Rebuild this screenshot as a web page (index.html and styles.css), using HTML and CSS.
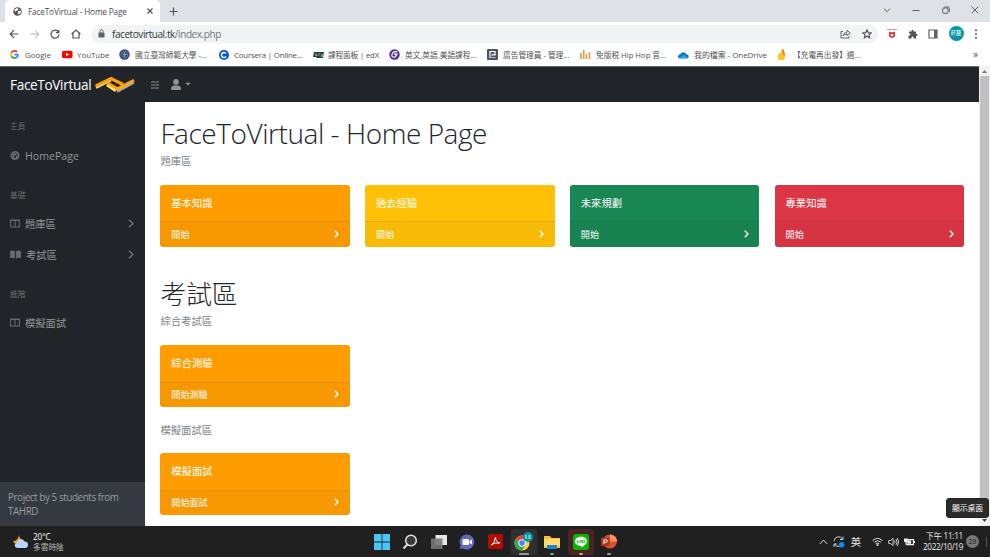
FILE: index.html
```html
<!DOCTYPE html>
<html lang="zh-Hant">
<head>
<meta charset="utf-8">
<title>FaceToVirtual - Home Page</title>
<link rel="stylesheet" href="styles.css">
</head>
<body>
<header class="tabs">
  <div class="tab">
    <svg width="9" height="9" viewBox="0 0 18 18"><circle cx="9" cy="9" r="8.5" fill="#555a60"/><path d="M3 5l5-3 3 2-2 3-4 1-1 3zM10 9l5-2 1 3-4 5-2-2z" fill="#fff"/></svg>
    <span class="tab-title">FaceToVirtual - Home Page</span>
    <svg width="6" height="6" viewBox="0 0 6 6" class="line dark"><path d="M.5.5l5 5M5.500.5l-5 5"/></svg>
  </div>
  <svg class="plus line dark" width="9" height="9" viewBox="0 0 9 9"><path d="M4.500.5v8M.5 4.500h8"/></svg>
  <div class="win">
    <svg class="line" width="8" height="8" viewBox="0 0 8 8"><path d="M.8 2.500L4 5.700l3.200-3.200"/></svg>
    <svg class="line" width="8" height="8" viewBox="0 0 8 8"><path d="M.5 4.500h7"/></svg>
    <svg class="line" width="8" height="8" viewBox="0 0 8 8"><rect x=".7" y="2" width="5.300" height="5.300" rx="1"/><path d="M2.300 1h3.700q1.300 0 1.300 1.300v3.500"/></svg>
    <svg class="line" width="8" height="8" viewBox="0 0 8 8"><path d="M.7.7l6.600 6.600M7.300.7L.7 7.300"/></svg>
  </div>
</header>
<div class="toolbar">
  <svg class="line dark" width="10" height="10" viewBox="0 0 10 10"><path d="M9.500 5H1.200M5 1.200L1.200 5 5 8.800"/></svg>
  <svg class="line pale" width="10" height="10" viewBox="0 0 10 10"><path d="M.5 5h8.300M5 1.200L8.800 5 5 8.800"/></svg>
  <svg class="line dark" width="10" height="10" viewBox="0 0 10 10"><path d="M8.400 3A4 4 0 1 0 9 5.500M8.900.7v3H6"/></svg>
  <svg class="line dark" width="10" height="10" viewBox="0 0 10 10"><path d="M.6 5L5 1l4.400 4M2 4.200V9h6V4.200"/></svg>
  <div class="address">
    <svg width="7" height="9" viewBox="0 0 7 9"><rect x=".5" y="3.500" width="6" height="5" rx=".6" fill="#5f6368"/><path d="M2 3.700V2.200a1.500 1.500 0 0 1 3 0v1.500" fill="none" stroke="#5f6368"/></svg>
    <span class="url">facetovirtual.tk<i>/index.php</i></span>
    <svg class="line share" width="11" height="10" viewBox="0 0 11 10"><path d="M3 2.500H1V9h8V7M3 7q.5-3.500 4-3.500V1.300L10.300 4 7 6.500V5Q4.500 5 3 7z"/></svg>
    <svg class="line dark" width="10" height="10" viewBox="0 0 10 10"><path d="M5 .9l1.250 2.700 2.900.3-2.200 2 .65 2.900L5 7.300 2.400 8.800l.65-2.900-2.200-2 2.900-.3z"/></svg>
  </div>
  <div class="actions">
    <svg width="10" height="10" viewBox="0 0 10 10"><path d="M0 0h10v1H0z" fill="#aaa"/><path d="M2 2.500l2 .8h2l2-.8v5L5 9.300 2 7.500z" fill="#d8343c"/><path d="M3.700 4.500L5 5.800l1.300-1.300v2L5 7.500l-1.300-1z" fill="#fff"/></svg>
    <svg width="10" height="10" viewBox="0 0 20 20"><path d="M2 5h5V3.500a2 2 0 0 1 4 0V5h5v5h1a2 2 0 0 1 0 4h-1v5h-5v-2a2 2 0 0 0-4 0v2H1v-6h2a2 2 0 0 0 0-4H2z" fill="#50555a"/></svg>
    <svg width="10" height="10" viewBox="0 0 10 10"><path d="M1 1h8v8H1z" fill="none" stroke="#5f6368" stroke-width="1.200"/><path d="M6 1h3v8H6z" fill="#5f6368"/></svg>
    <span class="avatar">軒騰</span>
    <svg width="4" height="10" viewBox="0 0 4 10" fill="#50555a"><circle cx="2" cy="1.200" r="1"/><circle cx="2" cy="5" r="1"/><circle cx="2" cy="8.800" r="1"/></svg>
  </div>
</div>
<nav class="bookmarks">
  <a><svg width="9" height="9" viewBox="0 0 18 18" fill="none" stroke-width="3.500"><path d="M14.500 4A7 7 0 0 0 3 5.500" stroke="#ea4335"/><path d="M3 5.500a7 7 0 0 0 0 7" stroke="#fbbc05"/><path d="M3 12.500A7 7 0 0 0 13 15" stroke="#34a853"/><path d="M13 15a7 7 0 0 0 3-6H9" stroke="#4285f4"/></svg><span>Google</span></a>
  <a><svg width="11" height="9" viewBox="0 0 11 9"><rect y=".7" width="10.500" height="7.600" rx="1.800" fill="#f00"/><path d="M4 2.700l3.200 1.800L4 6.300z" fill="#fff"/></svg><span>YouTube</span></a>
  <a><svg width="11" height="11" viewBox="0 0 11 11"><circle cx="5.500" cy="5.500" r="5.200" fill="#31517a"/><circle cx="5.500" cy="5.500" r="3.200" fill="none" stroke="#8196a8" stroke-dasharray="1 .7"/><path d="M5.500 3v5M3.500 5.500h4" stroke="#c0c5b1" stroke-width=".7"/></svg><span class="cn">國立臺灣師範大學 -...</span></a>
  <a><svg width="10" height="10" viewBox="0 0 10 10"><circle cx="5" cy="5" r="5" fill="#0056d2"/><path d="M7 3.500a2.500 2.500 0 1 0 0 3" fill="none" stroke="#fff" stroke-width="1.500"/></svg><span class="cour">Coursera | Online...</span></a>
  <a><svg width="11" height="8" viewBox="0 0 11 8"><path d="M1 1h10L10 7H4L3 6H0z" fill="#253f43"/><path d="M2 4.500h2M2 3h2M5 5l2-3M8 3l2 3M10 3L8 6" stroke="#c0d0cb" stroke-width=".7"/></svg><span class="cn edx">課程面板 | edX</span></a>
  <a><svg width="11" height="11" viewBox="0 0 11 11"><circle cx="5.500" cy="5.500" r="5.200" fill="#512d91"/><path d="M8.300 2.800Q4 2 3 5.300T6 8.200l2-3H5" fill="none" stroke="#fff" stroke-width="1.200"/></svg><span class="cn">英文,英語,美語課程...</span></a>
  <a><svg width="11" height="11" viewBox="0 0 11 11"><rect width="11" height="11" rx="1" fill="#4a5563"/><path d="M3 9V2.500h5v3.300H4.500" fill="none" stroke="#fff" stroke-width="1.200"/><path d="M3 8.500h5.500" stroke="#b7bdc5"/></svg><span class="cn">廣告管理員 - 管理...</span></a>
  <a><svg width="11" height="10" viewBox="0 0 11 10"><path d="M1 3v6M3.700 0v9M6.500 4v5M9.500 2v7" stroke="#d6a054" stroke-width="1.700"/></svg><span class="cn">免版税 Hip Hop 音...</span></a>
  <a><svg width="11" height="8" viewBox="0 0 11 8"><path d="M2 7.500a2 2 0 0 1 0-4 3.500 3.500 0 0 1 6.500 0 2 2 0 0 1 .5 4z" fill="#087ad5"/><path d="M1 7l5-3 4 3z" fill="#28a8ea"/></svg><span class="drive">我的檔案 - OneDrive</span></a>
  <a><svg width="11" height="11" viewBox="0 0 11 11"><path d="M4.500.5H7V3l1 1v3.500A3.700 3.700 0 1 1 4.500 4z" fill="#ffc629"/><path d="M4.500.5H7v2.700l1 .8v3L5 5z" fill="#ff8a24"/></svg><span class="cn">【充電再出發】週...</span></a>
  <b>»</b>
</nav>

<div class="page">
  <div class="site">
    <div class="topnav">
      <span class="brand">FaceToVirtual</span>
      <svg width="40" height="17" viewBox="0 0 40 17" fill="none"><path d="M1 11.500L16 4" stroke="#ffe07a" stroke-width="3"/><path d="M12 8.500l9 6" stroke="#ffe66c" stroke-width="3.500"/><path d="M.8 10L16 2.600 28 8.500" stroke="#ff9e0b" stroke-width="3.300"/><path d="M13.500 7.500l9.500 5.500" stroke="#ff9e0b" stroke-width="3"/><path d="M22 15.500L38.500 6.500" stroke="#a9aaaf" stroke-width="2.800"/><path d="M21.500 13.500L39 4.400" stroke="#ffa415" stroke-width="3.200"/></svg>
      <svg class="burger" width="8" height="8" viewBox="0 0 8 8"><path d="M0 1h8M0 4h8M0 7h8" stroke="#8b8d8f"/></svg>
      <svg class="user" width="20" height="11" viewBox="0 0 20 11" fill="#919395"><circle cx="5" cy="2.900" r="2.800"/><path d="M.2 11V9q0-2.500 3-2.500h3.600q3 0 3 2.500v2zM14.300 3.700h5.400L17 6.500z"/></svg>
    </div>
    <div class="body">
      <aside class="side">
        <div class="menu">
          <h6>主頁</h6>
          <a class="item latin"><svg width="10" height="9" viewBox="0 0 20 18"><circle cx="10" cy="9" r="9" fill="#66696c"/><path d="M10 12l4-7M4 9h2M6 5l1 1M10 3v2M16 10h-2" stroke="#212529" stroke-width="2"/><circle cx="10" cy="12" r="2" fill="#212529"/></svg><span>HomePage</span></a>
          <h6>基礎</h6>
          <a class="item"><svg width="10" height="9" viewBox="0 0 10 9"><path d="M.6 1h8.800v7H.6zM5 1v7M.5 1.500h9" fill="none" stroke="#66696c" stroke-width="1.100"/></svg><span>題庫區</span><svg class="go" width="6" height="9" viewBox="0 0 6 9"><path d="M1 .7l4 3.800-4 3.800"/></svg></a>
          <a class="item"><svg width="11" height="9" viewBox="0 0 11 9"><path d="M0 1q3-1 5 .2V8.500Q3 7.500 0 8zM11 1q-3-1-5 .2v7.300q2-1 5-.5z" fill="#66696c"/></svg><span>考試區</span><svg class="go" width="6" height="9" viewBox="0 0 6 9"><path d="M1 .7l4 3.800-4 3.800"/></svg></a>
          <h6>進階</h6>
          <a class="item last"><svg width="10" height="9" viewBox="0 0 10 9"><path d="M.6 1h8.800v7H.6zM5 1v7M.5 1.500h9" fill="none" stroke="#66696c" stroke-width="1.100"/></svg><span>模擬面試</span></a>
        </div>
        <footer>Project by 5 students from<br>TAHRD</footer>
      </aside>
      <main>
        <h1>FaceToVirtual - Home Page</h1>
        <p>題庫區</p>
        <section class="cards">
          <div class="card"><div>基本知識</div><a>開始<svg width="5" height="8" viewBox="0 0 5 8"><path d="M.8.8L4 4 .8 7.200"/></svg></a></div>
          <div class="card yellow"><div>過去經驗</div><a>開始<svg width="5" height="8" viewBox="0 0 5 8"><path d="M.8.8L4 4 .8 7.200"/></svg></a></div>
          <div class="card green"><div>未來規劃</div><a>開始<svg width="5" height="8" viewBox="0 0 5 8"><path d="M.8.8L4 4 .8 7.200"/></svg></a></div>
          <div class="card red"><div>專業知識</div><a>開始<svg width="5" height="8" viewBox="0 0 5 8"><path d="M.8.8L4 4 .8 7.200"/></svg></a></div>
        </section>
        <h1 class="zh">考試區</h1>
        <p>綜合考試區</p>
        <section class="cards">
          <div class="card"><div>綜合測驗</div><a>開始測驗<svg width="5" height="8" viewBox="0 0 5 8"><path d="M.8.8L4 4 .8 7.200"/></svg></a></div>
        </section>
        <p class="mock">模擬面試區</p>
        <section class="cards">
          <div class="card"><div>模擬面試</div><a>開始面試<svg width="5" height="8" viewBox="0 0 5 8"><path d="M.8.8L4 4 .8 7.200"/></svg></a></div>
        </section>
      </main>
    </div>
  </div>
  <div class="scroll"><svg width="5" height="3" viewBox="0 0 5 3"><path d="M0 3h5L2.500 0z" fill="#777"/></svg><i></i><svg width="5" height="3" viewBox="0 0 5 3"><path d="M0 0h5L2.500 3z" fill="#444"/></svg></div>
</div>
<div class="tooltip">顯示桌面</div>

<footer class="taskbar">
  <div class="weather">
    <svg width="16" height="15" viewBox="0 0 16 15"><path d="M6 1q0 4 4 5l-2 4q-6 1-8-3 5 0 6-6z" fill="#f7a823"/><path d="M4 14a2.800 2.800 0 0 1 0-5.500 4 4 0 0 1 7.500-1A3.300 3.300 0 0 1 12.500 14z" fill="#b8d4fb"/></svg>
    <div><b>20°C</b><span>多雲時陰</span></div>
  </div>
  <div class="apps">
    <span><svg width="16" height="16" viewBox="0 0 16 16" fill="#4cc5f7"><path d="M0 0h7.600v7.600H0zM8.400 0H16v7.600H8.400zM0 8.400h7.600V16H0zM8.400 8.400H16V16H8.400z"/></svg></span>
    <span><svg width="16" height="16" viewBox="0 0 16 16"><circle cx="9" cy="6.500" r="5.300" fill="#383b3d" stroke="#e2e2e2" stroke-width="1.500"/><path d="M5.300 10.500L1.500 14.500" stroke="#e2e2e2" stroke-width="1.900"/></svg></span>
    <span><svg width="16" height="15" viewBox="0 0 16 15"><path d="M4.500 1H16v10H4.500z" fill="#e7e7e7"/><path d="M0 4.500h11.500V15H0z" fill="#777" opacity=".9"/></svg></span>
    <span><svg width="16" height="16" viewBox="0 0 16 16"><path d="M8 .5a7.500 7.500 0 1 1-4 14L.8 15l.7-3.500A7.500 7.500 0 0 1 8 .5z" fill="#6565c5"/><rect x="3.500" y="5" width="6.500" height="6" rx="1" fill="#fff"/><path d="M10.500 7L13 5.500v5L10.500 9z" fill="#fff"/></svg></span>
    <span><svg width="15" height="15" viewBox="0 0 15 15"><rect width="15" height="15" rx="2" fill="#b30b00"/><path d="M3 11q4-2 4.500-8 0 5 4.500 6-5-1-9 2z" fill="none" stroke="#fff"/></svg></span>
    <span class="open"><svg width="19" height="19" viewBox="0 0 19 19"><circle cx="8" cy="11" r="7.500" fill="#ffcd40"/><path d="M8 11L1.500 7.200a7.500 7.500 0 0 1 13 0z" fill="#e94235"/><path d="M8 11L1.500 7.200A7.500 7.500 0 0 0 8 18.500l3-5z" fill="#34a853"/><circle cx="8" cy="11" r="3.400" fill="#4285f4" stroke="#fff"/><circle cx="14" cy="5" r="5" fill="#0794a5"/><path d="M11 4h2M11 6h2M12 3v4M14 4h3M14 6h3M15.500 3v4" stroke="#bfe8ea" stroke-width=".7"/></svg></span>
    <span class="run"><svg width="16" height="14" viewBox="0 0 16 14"><path d="M0 1h6l1.500 2H16v10H0z" fill="#f7bf36"/><path d="M0 4h16v7H0z" fill="#ffdc69"/><path d="M3 10h10v4H3z" fill="#1485d2"/></svg></span>
    <span class="run alert"><svg width="16" height="16" viewBox="0 0 16 16"><rect width="16" height="16" rx="3" fill="#06b700"/><path d="M8 2.800c3.300 0 6 2 6 4.700 0 2-2.500 4.200-5.500 6v-1.700C5 12 2 10.200 2 7.500s2.700-4.700 6-4.700z" fill="#fff"/><path d="M4.500 6v3h1.300M6.800 6v3M8 9V6l1.700 3V6M12.500 6H11v3h1.500M11 7.500h1.300" fill="none" stroke="#06b700" stroke-width=".7"/></svg></span>
    <span class="run"><svg width="16" height="16" viewBox="0 0 16 16"><circle cx="9" cy="7.500" r="7" fill="#d35230"/><path d="M9 .5a7 7 0 0 1 7 7H9z" fill="#ff8f6b"/><rect y="3.500" width="8.500" height="8.500" rx="1" fill="#b7341c"/><path d="M3 10V5.500h1.700q1.500 0 1.500 1.400T4.700 8.200H3" fill="none" stroke="#fff"/></svg></span>
  </div>
  <div class="tray">
    <svg width="9" height="6" viewBox="0 0 9 6"><path d="M.8 5L4.500 1l3.700 4" fill="none" stroke="#ddd"/></svg>
    <svg class="sync" width="12" height="12" viewBox="0 0 12 12"><path d="M1 5a4.600 4.600 0 0 1 8.500-2M10 .5v3H7M1 11V8h3M1.500 8.500A4.600 4.600 0 0 0 7 10" fill="none" stroke="#ccc"/><circle cx="8.600" cy="8.800" r="2.700" fill="#118bea"/></svg>
    <span class="ime">英</span>
    <svg class="wifi" width="11" height="9" viewBox="0 0 11 9"><path d="M.6 3.600q4.900-4.500 9.800 0M2.200 5.200q3.300-3 6.600 0M3.800 6.800q1.700-1.500 3.400 0" fill="none" stroke="#ddd"/><circle cx="5.500" cy="7.900" r="1" fill="#eee"/></svg>
    <svg class="vol" width="11" height="10" viewBox="0 0 11 10"><path d="M.7 3.500H2.500L5 1.300v7.400L2.500 6.500H.7zM6.500 3.500q1.200 1.500 0 3M8 2.200q2.200 2.800 0 5.600M9.300 1q3 4 0 8" fill="none" stroke="#ddd" stroke-width=".9"/></svg>
    <svg class="bat" width="11" height="10" viewBox="0 0 11 10"><path d="M3 2.600h6.500v5H3z" fill="#333" stroke="#eee" stroke-width="1.100"/><path d="M4 3.500h3v3.300H4zM0 1.500h4v3L2.500 5.500V8h-1V5.500L0 4.500zM10 4h1v2h-1z" fill="#eee"/></svg>
    <div class="clock"><span>下午 11:11</span><span>2022/10/19</span></div>
    <span class="badge">28</span>
    <i></i>
  </div>
</footer>
</body>
</html>
```
FILE: styles.css
```css
* { box-sizing: border-box; }
body {
  margin: 0; width: 990px; height: 557px; overflow: hidden;
  display: flex; flex-direction: column; position: relative;
  font-family: "Open Sans", "Noto Sans CJK TC", sans-serif;
  white-space: nowrap; color: #212529;
}
svg { display: block; flex: none; }
h1, h6, p { margin: 0; font-weight: 400; }
.line { fill: none; stroke: #5f6368; stroke-width: 1; }
.dark { stroke-width: 1.2; stroke: #50555a; }
.pale { stroke: #aeb1b5; }

.tabs { height: 22px; background: #dee1e6; display: flex; align-items: center; padding-left: 5px; }
.tab { width: 155px; height: 22px; background: #fff; border-radius: 5px 5px 0 0; display: flex; align-items: center; padding: 0 7px 0 8px; }
.tab-title { font-size: 8.2px; letter-spacing: -.14px; margin-left: 6px; flex: 1; color: #4a4e53; }
.plus { margin-left: 9px; }
.win { margin-left: auto; display: flex; gap: 21.5px; padding-right: 11px; margin-top: -2px; }

.toolbar { height: 23px; display: flex; align-items: center; gap: 10.500px; padding: 0 12px 0 9px; background: #fff; }
.address { flex: 1; height: 18px; border-radius: 9px; background: #f1f3f4; display: flex; align-items: center; padding: 0 6px 0 7px; margin-right: -1px; }
.url { font-size: 10px; letter-spacing: -.4px; margin-left: 7px; color: #33373b; letter-spacing: -.42px; }
.url { letter-spacing: -.4px; }
.url { font-size: 10.200px; letter-spacing: -.5px; }
.url { font-size: 10px; letter-spacing: -.43px; }
.url i { font-style: normal; color: #70757a; }
.share { margin-left: auto; margin-right: 11px; }
.actions { display: flex; align-items: center; gap: 10.500px; }
.avatar { width: 15px; height: 15px; border-radius: 50%; background: #0794a3; color: #fff; font-size: 5.500px; line-height: 15px; text-align: center; }

.bookmarks {
  height: 21px; display: grid; align-items: center; padding: 0 0 2px 10px; background: #fff;
  grid-template-columns: 52px 57px 100px 94px 76px 98px 93px 98px 99px 196px auto;
  font-size: 7.900px; color: #4d5156;
}
.bookmarks a { display: grid; grid-template-columns: 15px auto; align-items: center; justify-content: start; line-height: 16px; }
.bookmarks a:nth-child(n+3) { grid-template-columns: 16px auto; }
.bookmarks a:nth-child(4), .bookmarks a:nth-child(5) { grid-template-columns: 15px auto; }
.bookmarks b { font-weight: 400; font-size: 10px; line-height: 12px; margin-top: -2px; }
.bookmarks .cn { font-size: 7.700px; }
.bookmarks .cour { letter-spacing: -.2px; }
.bookmarks .edx { letter-spacing: -.15px; }

.page { height: 460px; display: flex; }
.site { width: 979px; }
.topnav { height: 36px; background: #212529; display: flex; align-items: center; padding-left: 10px; border-top: 1px solid #676b6e; }
.brand { width: 81px; margin-right: 4px; font-size: 13.600px; letter-spacing: -.34px; color: #fff; padding-bottom: 1px; }
.burger { margin-left: 16px; }
.user { margin-left: 12px; }
.body { height: 424px; display: flex; }
.side { width: 145px; background: #212529; display: flex; flex-direction: column; }
.menu { flex: 1; }
.side h6 { font-size: 7.700px; line-height: 12px; color: #686b6e; padding: 18px 0 8px 10px; }
.side h6:not(:first-child) { padding-top: 17.500px; }
.item { height: 31px; display: flex; align-items: center; padding: 0 11px 0 10px; font-size: 10.300px; color: #929496; }
.item:not(.latin) { height: 30.800px; }
.item:not(.latin) span { margin-top: -1px; }
.latin { font-size: 10.600px; }
.item span { margin-left: 5px; }
.go { margin-left: auto; fill: none; stroke: #777a7c; stroke-width: 1.200; }
.side footer { height: 44px; background: #343a40; color: #989b9e; font-size: 9.900px; letter-spacing: -.43px; line-height: 14px; padding: 8px; }
main { flex: 1; background: #fff; padding: 12px 15px 0 15.500px; }
h1 { font-size: 28px; line-height: 38px; font-weight: 300; letter-spacing: -.45px; }
.zh { margin-top: 27px; margin-bottom: 2px; font-size: 25.700px; line-height: 38px; letter-spacing: 0; font-family: "Noto Sans CJK TC", sans-serif; }
p { font-size: 10.300px; line-height: 16px; color: #7e858b; margin-top: 1px; }
.zh + p { margin-top: 0; padding-bottom: 1px; line-height: 15px; }
.cards { display: grid; grid-template-columns: repeat(4, 1fr); column-gap: 15.300px; margin-top: 15.500px; margin-left: -.2px; }
.card { height: 62px; border-radius: 3px; overflow: hidden; background: #ff9d00; color: #fff; }
.card div { height: 36.500px; line-height: 37px; padding-left: 11px; font-size: 10.300px; }
.card a { height: 25.500px; border-top: 1px solid #0001; background: #00000008; display: flex; align-items: center; justify-content: space-between; padding: 0 10.500px 1px 11px; font-size: 9.100px; }
.card svg { fill: none; stroke: #fff; stroke-width: 1.400; }
.yellow { background: #ffc107; }
.green { background: #198754; }
.red { background: #dc3545; }
.mock { margin-top: 14.500px; }
.scroll { width: 11px; background: #f1f1f1; display: flex; flex-direction: column; align-items: center; justify-content: space-between; padding: 4px 0; }
.scroll i { width: 9px; height: 440px; background: #c1c1c1; }
.tooltip { position: absolute; right: 1px; bottom: 39px; width: 43px; height: 20px; line-height: 19px; background: #2b2b2b; border: 1px solid #202020; border-radius: 3px; color: #fff; text-align: center; font-size: 7.800px; }

.taskbar { height: 31px; background: #202020; color: #eee; display: flex; align-items: center; padding-left: 13px; }
.weather { width: 356px; display: flex; align-items: center; gap: 4px; font-size: 7.700px; line-height: 10px; }
.weather b, .weather span { display: block; font-weight: 400; }
.weather b { color: #fff; letter-spacing: -.1px; font-size: 8.200px; }
.weather span { color: #bbb; }
.apps { display: flex; gap: 2.400px; }
.apps span { width: 26px; height: 26px; border-radius: 3px; display: grid; place-items: center; position: relative; }
.apps .open { background: #303030; }
.apps .alert { background: #4b2324; }
.run::after, .open::after { content: ""; position: absolute; bottom: 0; left: 11px; width: 4px; height: 2px; border-radius: 1px; background: #999; }
.apps .open::after { left: 8px; width: 10px; }
.apps .alert::after { background: #ed9292; }
.tray { margin-left: auto; display: flex; align-items: center; }
.sync { margin-left: 5px; }
.ime { font-size: 10.300px; margin: 0 11px 0 6px; }
.vol { margin: 0 5px; }
.clock { width: 48px; text-align: right; font-size: 8.200px; line-height: 10.500px; letter-spacing: -.28px; }
.clock span { display: block; }
.clock span:last-child { letter-spacing: -.35px; }
.badge { width: 13px; height: 13px; line-height: 13px; border-radius: 50%; background: #777; color: #222; font-size: 7px; text-align: center; margin: 0 7px 0 3px; }
.tray i { width: 1px; height: 10px; background: #555; margin-right: 3px; }
```
